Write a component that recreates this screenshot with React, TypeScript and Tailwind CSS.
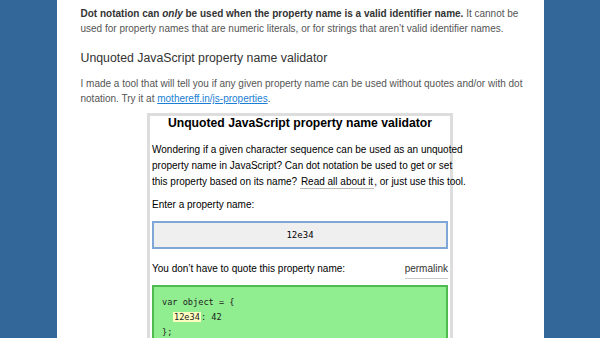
const App = () => {
  return (
    <div className="h-[338px] overflow-hidden bg-[#336699]">
      <div className="mx-auto h-full w-[487px] bg-white px-[24px] pt-[6px] font-['Liberation_Sans',Arial,sans-serif] text-[#555]">
        {/* intro */}
        <p className="whitespace-nowrap text-[10px] leading-[15px]">
          <strong className="text-[#333]">
            Dot notation can <em>only</em> be used when the property name is a valid identifier name.
          </strong>{" "}
          It cannot be
          <br />
          used for property names that are numeric literals, or for strings that aren’t valid identifier names.
        </p>
        <h2 className="mt-[14px] whitespace-nowrap text-[12.3px] leading-[16px] text-[#333]">
          Unquoted JavaScript property name validator
        </h2>
        <p className="mt-[10px] whitespace-nowrap text-[10px] leading-[15px]">
          I made a tool that will tell you if any given property name can be used without quotes and/or with dot
          <br />
          notation. Try it at{" "}
          <a className="text-[#1a7fd4] underline" href="#">
            mothereff.in/js-properties
          </a>
          .
        </p>

        {/* embedded tool */}
        <div className="mx-auto mt-[7px] w-[306px] border-[3px] border-b-0 border-[#dddddd] px-[2px] text-[10px] leading-[16px] text-black">
          <h3 className="whitespace-nowrap text-center text-[12.2px] font-bold leading-[15px]">
            Unquoted JavaScript property name validator
          </h3>
          <p className="mt-[11px] whitespace-nowrap">
            Wondering if a given character sequence can be used as an unquoted
            <br />
            property name in JavaScript? Can dot notation be used to get or set
            <br />
            this property based on its name?{" "}
            <span className="border-b border-[#bbb] px-[1px] pb-[1px]">Read all about it</span>, or just use this tool.
          </p>
          <p className="mt-[7px]">Enter a property name:</p>
          <div className="mt-[8px] flex h-[28px] items-center justify-center border-2 border-[#7fa6d6] bg-[#efefef] font-['DejaVu_Sans_Mono',monospace] text-[9px]">
            12e34
          </div>
          <div className="mt-[12px] flex items-start justify-between">
            <span>You don’t have to quote this property name:</span>
            <span className="border-b border-[#ccc] pb-[1px] text-[#333]">permalink</span>
          </div>
          <div className="mt-[6px] h-[60px] border-2 border-[#4fbb4f] bg-[#90ee90] pl-[8px] pt-[8px] font-['DejaVu_Sans_Mono',monospace] text-[8.6px] leading-[15px] text-[#222]">
            <div>var object = {"{"}</div>
            <div className="pl-[11px]">
              <span className="bg-[#fdfdc0] px-[1px]">12e34</span>: 42
            </div>
            <div>{"};"}</div>
          </div>
        </div>
      </div>
    </div>
  );
};

export default App;
